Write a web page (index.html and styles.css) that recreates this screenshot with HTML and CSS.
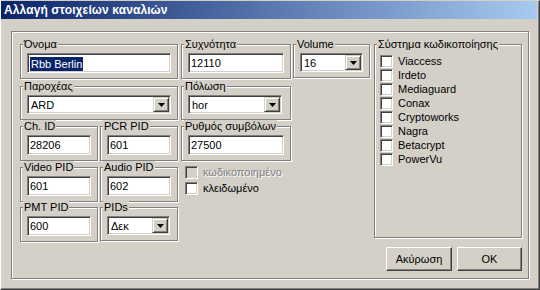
FILE: index.html
```html
<!DOCTYPE html>
<html lang="el">
<head>
<meta charset="utf-8">
<title>Αλλαγή στοιχείων καναλιών</title>
<link rel="stylesheet" href="styles.css">
</head>
<body>
<div class="window">
  <div class="titlebar">Αλλαγή στοιχείων καναλιών</div>
  <div class="client">
    <div class="panel">
      <div class="left">
        <div class="row row1">
          <fieldset class="grp w-wide"><legend>Όνομα</legend>
            <div class="edit w-144"><span class="hl">Rbb Berlin</span></div>
          </fieldset>
          <fieldset class="grp w-mid gap3"><legend>Συχνότητα</legend>
            <div class="edit w-96">12110</div>
          </fieldset>
          <fieldset class="grp w-vol gap2"><legend>Volume</legend>
            <div class="combo w-63"><span class="val">16</span><span class="drop"><svg width="7" height="4" viewBox="0 0 7 4"><path d="M0 0h7L3.5 4z" fill="#000"/></svg></span></div>
          </fieldset>
        </div>
        <div class="row row2">
          <fieldset class="grp w-wide"><legend>Παροχέας</legend>
            <div class="combo w-144"><span class="val">ARD</span><span class="drop"><svg width="7" height="4" viewBox="0 0 7 4"><path d="M0 0h7L3.5 4z" fill="#000"/></svg></span></div>
          </fieldset>
          <fieldset class="grp w-mid gap3"><legend>Πόλωση</legend>
            <div class="combo w-94"><span class="val">hor</span><span class="drop"><svg width="7" height="4" viewBox="0 0 7 4"><path d="M0 0h7L3.5 4z" fill="#000"/></svg></span></div>
          </fieldset>
        </div>
        <div class="row row3">
          <fieldset class="grp w-small"><legend>Ch. ID</legend>
            <div class="edit w-64">28206</div>
          </fieldset>
          <fieldset class="grp w-small gap2"><legend>PCR PID</legend>
            <div class="edit w-64">601</div>
          </fieldset>
          <fieldset class="grp w-mid gap3"><legend>Ρυθμός συμβόλων</legend>
            <div class="edit w-96">27500</div>
          </fieldset>
        </div>
        <div class="row row4">
          <fieldset class="grp w-small"><legend>Video PID</legend>
            <div class="edit w-64">601</div>
          </fieldset>
          <fieldset class="grp w-small gap2"><legend>Audio PID</legend>
            <div class="edit w-64">602</div>
          </fieldset>
          <div class="flags">
            <div class="chk disabled"><span class="cb"></span><span class="lbl">κωδικοποιημένο</span></div>
            <div class="chk"><span class="cb"></span><span class="lbl">κλειδωμένο</span></div>
          </div>
        </div>
        <div class="row row5">
          <fieldset class="grp w-small"><legend>PMT PID</legend>
            <div class="edit w-64">600</div>
          </fieldset>
          <fieldset class="grp w-small gap2"><legend>PIDs</legend>
            <div class="combo w-63"><span class="val">Δεκ</span><span class="drop"><svg width="7" height="4" viewBox="0 0 7 4"><path d="M0 0h7L3.5 4z" fill="#000"/></svg></span></div>
          </fieldset>
        </div>
      </div>
      <div class="right">
        <fieldset class="grp crypt"><legend>Σύστημα κωδικοποίησης</legend>
          <div class="chk"><span class="cb"></span><span class="lbl">Viaccess</span></div>
          <div class="chk"><span class="cb"></span><span class="lbl">Irdeto</span></div>
          <div class="chk"><span class="cb"></span><span class="lbl">Mediaguard</span></div>
          <div class="chk"><span class="cb"></span><span class="lbl">Conax</span></div>
          <div class="chk"><span class="cb"></span><span class="lbl">Cryptoworks</span></div>
          <div class="chk"><span class="cb"></span><span class="lbl">Nagra</span></div>
          <div class="chk"><span class="cb"></span><span class="lbl">Betacrypt</span></div>
          <div class="chk"><span class="cb"></span><span class="lbl">PowerVu</span></div>
        </fieldset>
        <div class="buttons">
          <button class="btn btn-cancel" type="button">Ακύρωση</button>
          <button class="btn btn-ok" type="button">OK</button>
        </div>
      </div>
    </div>
  </div>
</div>
</body>
</html>
```

FILE: styles.css
```css
* { box-sizing: border-box; }
html, body { margin: 0; padding: 0; }
body {
  width: 540px;
  height: 290px;
  overflow: hidden;
  background: #d4d0c8;
  font-family: "Liberation Sans", Arial, sans-serif;
  font-size: 11px;
  color: #000;
}
.window {
  width: 540px;
  height: 290px;
  border-left: 1px solid #fff;
  border-right: 1px solid #404040;
  border-bottom: 1px solid #404040;
  border-top: 1px solid #d4d0c8;
  box-shadow: inset -1px -1px 0 #808080;
  padding-right: 2px;
  display: flex;
  flex-direction: column;
}
.titlebar {
  height: 18px;
  background: linear-gradient(to right, #0a246a, #a6caf0);
  color: #fff;
  font-weight: bold;
  font-size: 12px;
  letter-spacing: 0.1px;
  line-height: 19px;
  padding-left: 3px;
  white-space: nowrap;
}
.client { padding: 12px 0 0 10px; }
.panel {
  width: 518px;
  height: 248px;
  border: 1px solid #808080;
  box-shadow: inset 1px 1px 0 #fff, 1px 1px 0 #fff;
  display: flex;
  justify-content: space-between;
  padding: 6px 6px 7px 8px;
}
.left { width: 350px; display: flex; flex-direction: column; }
.right { width: 148px; display: flex; flex-direction: column; gap: 9px; }
.row { display: flex; align-items: flex-start; }
.row2 { margin-top: 1px; }
.row3 { margin-top: 0; }
.row4 { margin-top: 0; }
.row5 { margin-top: -1px; }

.grp {
  margin: 0;
  min-width: 0;
  border: 1px solid #808080;
  box-shadow: inset 1px 1px 0 #fff, 1px 1px 0 #fff;
  padding: 2px 6px 5px 6px;
}
.grp legend {
  margin-left: -4px;
  padding: 0 1px;
  line-height: 13px;
  background: #d4d0c8;
  white-space: nowrap;
}
.w-wide { width: 158px; }
.w-mid { width: 110px; }
.w-vol { width: 77px; }
.w-small { width: 78px; }
.gap2 { margin-left: 2px; }
.gap3 { margin-left: 3px; }

.edit, .combo {
  height: 20px;
  border: 1px solid;
  border-color: #808080 #fff #fff #808080;
  box-shadow: inset 1px 1px 0 #404040, inset -1px -1px 0 #d4d0c8;
  background: #fff;
  white-space: nowrap;
}
.edit { padding: 0 2px; line-height: 18px; }
.combo { height: 19px; display: flex; align-items: stretch; padding: 1px; }
.combo .val { flex: 1; padding-left: 2px; line-height: 16px; }
.drop {
  width: 16px;
  flex: none;
  display: flex;
  align-items: center;
  justify-content: center;
  background: #d4d0c8;
  border: 1px solid;
  border-color: #d4d0c8 #404040 #404040 #d4d0c8;
  box-shadow: inset 1px 1px 0 #fff, inset -1px -1px 0 #808080;
}
.drop svg { display: block; }
.w-144 { width: 144px; }
.w-96 { width: 96px; }
.w-94 { width: 94px; }
.w-64 { width: 64px; }
.w-63 { width: 63px; }

.hl {
  display: inline-block;
  background: #0a246a;
  color: #fff;
  line-height: 14px;
  padding: 0 1px;
  vertical-align: middle;
}

.flags { margin-left: 7px; padding-top: 5px; display: flex; flex-direction: column; gap: 3px; }
.chk { display: flex; align-items: center; gap: 5px; height: 13px; }
.cb {
  width: 13px;
  height: 13px;
  flex: none;
  border: 1px solid;
  border-color: #808080 #fff #fff #808080;
  box-shadow: inset 1px 1px 0 #404040, inset -1px -1px 0 #d4d0c8;
  background: #fff;
}
.disabled .cb { background: #d4d0c8; }
.disabled .lbl { color: #808080; text-shadow: 1px 1px 0 #fff; }
.lbl { line-height: 13px; white-space: nowrap; }

.crypt { flex: 1; padding: 4px 5px 5px 5px; display: flex; flex-direction: column; gap: 1px; }
.crypt legend { margin-left: -3px; }
.crypt .chk { height: 13px; }

.buttons { display: flex; justify-content: flex-end; gap: 5px; }
.btn {
  height: 24px;
  margin: 0;
  padding: 0;
  font: inherit;
  color: #000;
  background: #d4d0c8;
  border: 1px solid;
  border-color: #fff #404040 #404040 #fff;
  box-shadow: inset -1px -1px 0 #808080;
}
.btn-cancel { width: 66px; }
.btn-ok { width: 65px; }
```
